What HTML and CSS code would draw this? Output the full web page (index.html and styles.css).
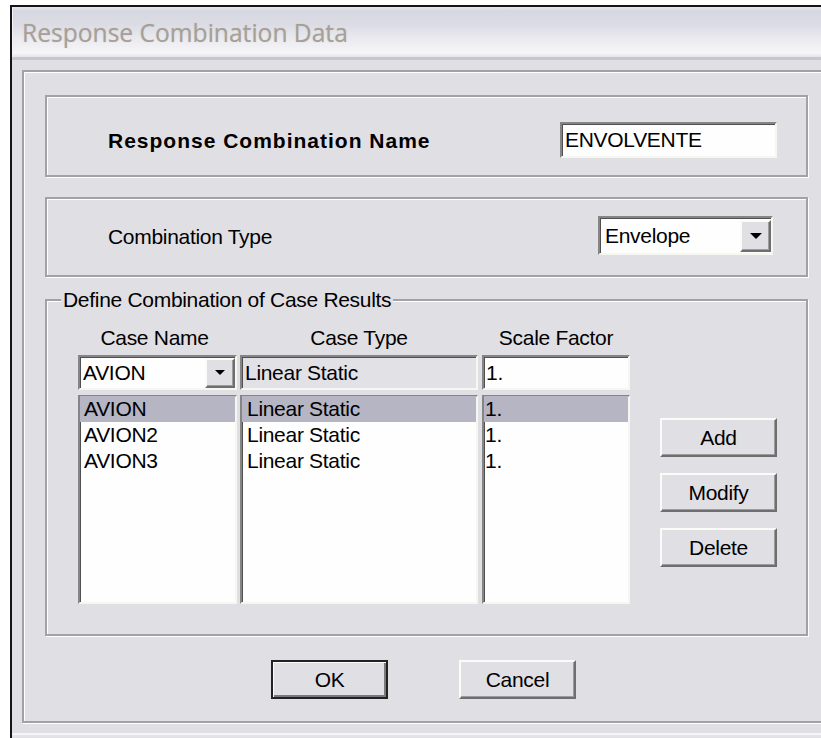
FILE: index.html
```html
<!DOCTYPE html>
<html lang="en">
<head>
<meta charset="utf-8">
<title>Response Combination Data</title>
<link rel="stylesheet" href="styles.css">
</head>
<body>
<div class="window">
  <div class="titlebar"><span class="title">Response Combination Data</span></div>
  <div class="client">
    <div class="frame">
      <div class="group group-name">
        <span class="name-label">Response Combination Name</span>
        <div class="edit sunken name-edit">ENVOLVENTE</div>
      </div>

      <div class="group group-type">
        <span class="type-label">Combination Type</span>
        <div class="combo sunken type-combo">
          <span class="combo-text">Envelope</span>
          <span class="drop-btn drop-big">
            <svg width="12" height="6" viewBox="0 0 12 6"><polygon points="0,0 12,0 6,6" fill="#000"/></svg>
          </span>
        </div>
      </div>

      <fieldset class="group cases">
        <legend>Define Combination of Case Results</legend>
        <div class="case-grid">
          <div class="col-head w-name">Case Name</div>
          <div class="col-head w-type">Case Type</div>
          <div class="col-head w-scale">Scale Factor</div>
          <div></div>

          <div class="combo sunken case-combo w-name">
            <span class="combo-text">AVION</span>
            <span class="drop-btn drop-small">
              <svg width="10" height="5" viewBox="0 0 10 5"><polygon points="0,0 10,0 5,5" fill="#000"/></svg>
            </span>
          </div>
          <div class="edit sunken readonly w-type field-type">Linear Static</div>
          <div class="edit sunken w-scale field-scale">1.</div>
          <div></div>

          <ul class="list sunken w-name list-name">
            <li class="selected">AVION</li>
            <li>AVION2</li>
            <li>AVION3</li>
          </ul>
          <ul class="list sunken w-type list-type">
            <li class="selected">Linear Static</li>
            <li>Linear Static</li>
            <li>Linear Static</li>
          </ul>
          <ul class="list sunken w-scale list-scale">
            <li class="selected">1.</li>
            <li>1.</li>
            <li>1.</li>
          </ul>
          <div class="side-buttons">
            <button class="btn side-btn">Add</button>
            <button class="btn side-btn">Modify</button>
            <button class="btn side-btn">Delete</button>
          </div>
        </div>
      </fieldset>

      <div class="dialog-buttons">
        <button class="btn dlg-btn default">OK</button>
        <button class="btn dlg-btn">Cancel</button>
      </div>
    </div>
  </div>
  <div class="window-bottom"></div>
</div>
</body>
</html>
```

FILE: styles.css
```css
* {
  box-sizing: border-box;
}

html,
body {
  margin: 0;
  padding: 0;
  background: #ffffff;
  overflow: hidden;
}

body {
  width: 821px;
  height: 738px;
  font-family: "Liberation Sans", Arial, sans-serif;
  font-size: 21px;
  letter-spacing: -0.3px;
  color: #000;
}

/* ---- window chrome ---- */
.window {
  margin: 5px 0 0 10px;
  width: 850px;
  height: 740px;
  border-top: 2px solid #151515;
  border-left: 2px solid #151515;
  background: #e0dfe4;
  display: flex;
  flex-direction: column;
}

.titlebar {
  height: 53px;
  padding: 9px 0 0 10px;
  background: linear-gradient(#e6e6ee 0px, #d7d7e1 4px, #dcdce5 18px, #ececf1 34px, #f6f6f8 46px, #e4e4ea 50px);
  border-bottom: 3px solid #c7c7d3;
  box-shadow: inset 1px 0 0 #f4f4f8;
}

.title {
  font-family: "Open Sans", "Noto Sans", sans-serif;
  font-size: 24.6px;
  line-height: 34px;
  letter-spacing: 0;
  color: #a7a097;
  text-shadow: 0 0 1px rgba(165, 155, 145, 0.5);
}

.client {
  padding: 10px 0 0 10px;
}

/* etched frames */
.frame,
.group {
  border: 2px solid #a2a2a6;
  box-shadow: inset 1px 1px 0 #ffffff, 1px 1px 0 #ffffff;
}

.frame {
  width: 830px;
  padding: 23px 0 22px 21px;
}

.group {
  width: 763px;
}

/* ---- name group ---- */
.group-name {
  height: 82px;
  padding: 25px 29px 0 61px;
  display: flex;
  justify-content: space-between;
  align-items: flex-start;
}

.name-label {
  margin-top: 7px;
  line-height: 24px;
  font-weight: bold;
  letter-spacing: 1px;
}

/* ---- sunken controls ---- */
.sunken {
  border: 2px solid;
  border-color: #858585 #f7f7f1 #f7f7f1 #858585;
  box-shadow: inset 1px 1px 0 #505050;
  background: #fefefe;
}

.edit {
  padding-left: 3px;
  white-space: nowrap;
}

.name-edit {
  width: 217px;
  height: 36px;
  line-height: 31px;
}

/* ---- combination type group ---- */
.group-type {
  margin-top: 20px;
  height: 80px;
  padding: 17px 33px 0 61px;
  display: flex;
  justify-content: space-between;
  align-items: flex-start;
}

.type-label {
  margin-top: 9px;
  line-height: 24px;
}

.combo {
  display: flex;
  align-items: center;
}

.combo-text {
  flex: 1;
  padding-left: 5px;
}

.type-combo {
  width: 175px;
  height: 39px;
}

.drop-btn {
  display: flex;
  align-items: center;
  justify-content: center;
  background: #e0dfe4;
  border: 2px solid;
  border-color: #fbfbf7 #6e6e6e #6e6e6e #fbfbf7;
  box-shadow: inset -1px -1px 0 #9c9c9c;
}

.drop-big {
  width: 31px;
  height: 32px;
}

.drop-small {
  width: 30px;
  height: 30px;
}

/* ---- case results group ---- */
.cases {
  margin: 11px 0 0 0;
  min-width: 0;
  padding: 14px 0 30px 31px;
}

.cases legend {
  margin-left: -17px;
  padding: 0 2px;
  line-height: 24px;
  background: #e0dfe4;
}

.case-grid {
  display: grid;
  grid-template-columns: 162px 242px 178px 117px;
  grid-template-rows: 24px 35px 209px;
  row-gap: 5px;
}

.w-name {
  width: 159px;
}

.w-type {
  width: 238px;
}

.w-scale {
  width: 148px;
}

.col-head {
  text-align: center;
  line-height: 24px;
}

.col-head.w-name {
  padding-right: 6px;
}

.case-combo .combo-text {
  padding-left: 3px;
}

.field-type,
.field-scale {
  line-height: 31px;
}

.readonly {
  background: #e2e1e6;
}

.field-scale {
  padding-left: 2px;
}

.list {
  margin: 0;
  padding: 0;
  list-style: none;
  height: 209px;
}

.list li {
  height: 26px;
  line-height: 26px;
  padding-left: 4px;
  white-space: nowrap;
}

.list-name li {
  padding-left: 4px;
}

.list-type li {
  padding-left: 5px;
}

.list-scale li {
  padding-left: 1px;
}

.list li.selected {
  background: #b5b5c3;
}

.list li:first-child {
  margin-top: -1px;
}

/* ---- push buttons ---- */
.btn {
  font-family: inherit;
  font-size: inherit;
  letter-spacing: inherit;
  color: #000;
  background: #e0dfe4;
  border: 2px solid;
  border-color: #fbfbf7 #6e6e6e #6e6e6e #fbfbf7;
  box-shadow: inset -1px -1px 0 #9c9c9c;
  padding: 0;
  margin: 0;
  text-align: center;
}

.side-buttons {
  display: flex;
  flex-direction: column;
  gap: 16px;
  padding-top: 23px;
}

.side-btn {
  width: 117px;
  height: 39px;
}

.dialog-buttons {
  display: flex;
  gap: 71px;
  margin-top: 24px;
  padding-left: 226px;
}

.dlg-btn {
  width: 117px;
  height: 39px;
}

/* default push button: dark outline around the raised face */
.dlg-btn.default {
  border: 2px solid #222222;
  box-shadow: inset 1px 1px 0 #fbfbf7, inset -2px -2px 0 #7a7a7a;
}

.window-bottom {
  margin-top: 10px;
  height: 4px;
  border-top: 2px solid #f6f6f8;
  background: #e4e4ea;
}
```
